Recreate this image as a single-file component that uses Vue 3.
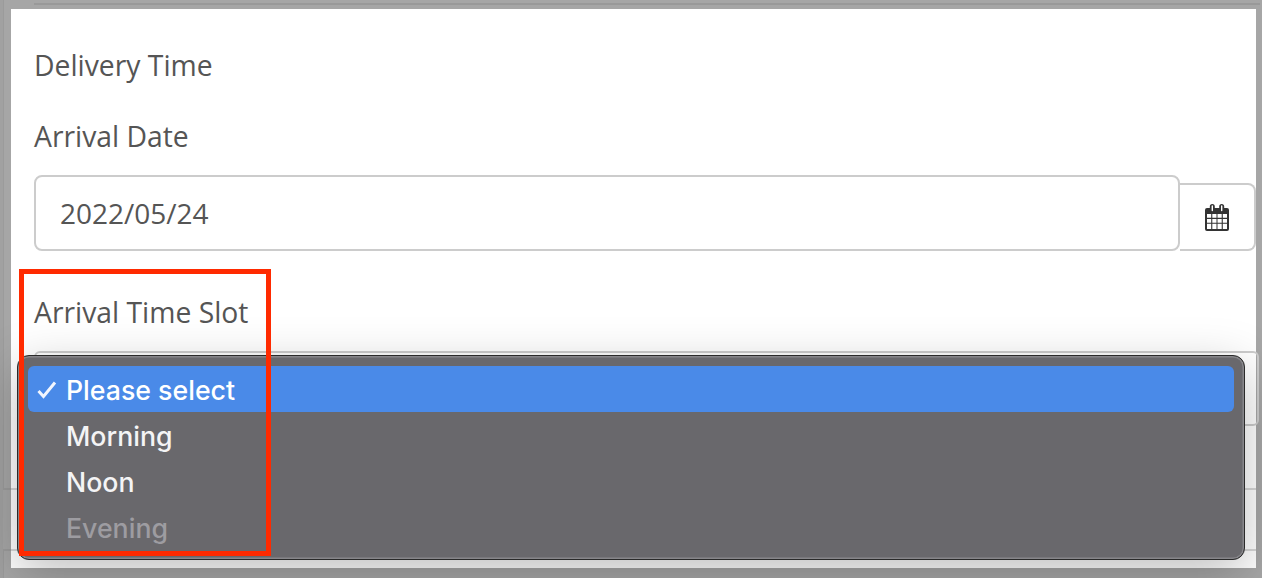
<script setup>
import { ref } from 'vue';

const arrivalDate = ref('2022/05/24');
const slots = [
  { label: 'Please select', selected: true },
  { label: 'Morning' },
  { label: 'Noon' },
  { label: 'Evening', disabled: true }
];
</script>

<template>
  <div class="page">
    <div class="top-strip"></div>
    <section class="panel">
      <h2 class="title">Delivery Time</h2>
      <label class="label">Arrival Date</label>
      <div class="date-row">
        <div class="input">{{ arrivalDate }}</div>
        <button class="cal-btn">
          <svg width="26" height="29" viewBox="0 0 26 29">
            <path fill="#333" d="M1 7a2 2 0 0 1 2-2h2.800V3.500a2.500 2.500 0 0 1 5 0V5h4.400V3.500a2.500 2.500 0 0 1 5 0V5H23a2 2 0 0 1 2 2v19a2 2 0 0 1-2 2H3a2 2 0 0 1-2-2z" />
            <path fill="none" stroke="#fff" stroke-width="1.400" stroke-linecap="round" d="M8.300 3v4.500M17.700 3v4.500" />
            <path fill="#fff" d="M3 11h4.200v3.800H3zM8.300 11h4.200v3.800H8.300zM13.500 11h4.200v3.800h-4.200zM18.800 11H23v3.800h-4.200zM3 15.900h4.200v3.800H3zM8.300 15.900h4.200v3.800H8.300zM13.500 15.900h4.200v3.800h-4.200zM18.800 15.900H23v3.800h-4.200zM3 20.800h4.200V26H3zM8.300 20.800h4.200V26H8.300zM13.500 20.800h4.200V26h-4.200zM18.800 20.800H23V26h-4.200z" />
          </svg>
        </button>
      </div>
      <label class="label slot-label">Arrival Time Slot</label>
      <div class="select"></div>
      <div class="rule rule-one"></div>
      <div class="rule rule-two"></div>

      <ul class="dropdown">
        <li v-for="slot in slots" :key="slot.label" class="option" :class="{ selected: slot.selected, disabled: slot.disabled }">
          <svg v-if="slot.selected" class="check" width="20" height="18" viewBox="0 0 20 18">
            <path fill="none" stroke="#f2f6fe" stroke-width="3" d="M1.500 10l5 5.500L18 1.500" />
          </svg>
          {{ slot.label }}
        </li>
      </ul>
      <div class="highlight-box"></div>
    </section>
  </div>
</template>

<style>
html, body {
  margin: 0;
  background: #a6a6a6;
}
</style>

<style scoped>
.page {
  width: 1262px;
  height: 578px;
  overflow: hidden;
  background:
    linear-gradient(#9b9b9b, #9b9b9b) 3px 0 / 1px 489px no-repeat,
    linear-gradient(#9b9b9b, #9b9b9b) 3px 549px / 1px 29px no-repeat,
    linear-gradient(#a1a1a1, #a1a1a1) 0 0 / 3px 100% no-repeat,
    #a6a6a6;
  font-family: "Open Sans", sans-serif;
  color: #555;
}

.top-strip {
  height: 9px;
  box-sizing: border-box;
  padding-top: 3px;
  margin: 0 2px 0 34px;
}

.top-strip::before {
  content: "";
  display: block;
  height: 2px;
  background: #999;
}

.panel {
  position: relative;
  box-sizing: border-box;
  width: 1245px;
  height: 559px;
  margin-left: 11px;
  padding: 36px 0 0 23px;
  background: #fff;
}

.title {
  margin: 0;
  font-size: 28.300px;
  font-weight: 400;
  line-height: 40px;
}

.label {
  display: block;
  margin-top: 31px;
  font-size: 28.300px;
  line-height: 40px;
}

.date-row {
  display: flex;
  align-items: flex-end;
  margin-top: 19px;
}

.input {
  box-sizing: border-box;
  width: 1146px;
  height: 76px;
  padding-left: 24px;
  border: 2px solid #ccc;
  border-radius: 8px;
  font-size: 28px;
  line-height: 73px;
}

.cal-btn {
  display: flex;
  align-items: center;
  justify-content: center;
  box-sizing: border-box;
  width: 76px;
  height: 68px;
  padding: 0;
  border: 2px solid #ccc;
  border-left: 0;
  border-radius: 0 8px 8px 0;
  background: #fff;
}

.slot-label {
  margin-top: 41px;
}

.select {
  box-sizing: border-box;
  width: 1225px;
  height: 75px;
  margin-top: 19px;
  border: 2px solid #ccc;
  border-radius: 6px;
}

.rule {
  height: 2px;
  margin-left: -31px;
  background: linear-gradient(90deg, #9b9b9b 8px, #d8d8d8 8px);
}

.rule-one {
  margin-top: 62px;
}

.rule-two {
  margin-top: 59px;
}

.dropdown {
  position: absolute;
  left: 6px;
  top: 346px;
  box-sizing: border-box;
  width: 1228px;
  height: 205px;
  margin: 0;
  padding: 10px 10px;
  list-style: none;
  background: #69686c;
  border: 1px solid #2a2a2a;
  border-radius: 12px;
  box-shadow: inset 0 0 0 1.500px #87868a, 0 14px 50px rgba(0, 0, 0, 0.25);
  font-family: Inter, sans-serif;
  font-size: 26.700px;
  font-weight: 500;
}

.option {
  position: relative;
  height: 46px;
  padding-left: 38px;
  line-height: 49px;
  color: #f4f4f5;
  border-radius: 6px;
}

.selected {
  background: #4a8ae8;
  color: #fff;
}

.disabled {
  color: #9d9ca1;
}

.check {
  position: absolute;
  left: 9px;
  top: 15px;
}

.highlight-box {
  position: absolute;
  left: 8px;
  top: 260px;
  box-sizing: border-box;
  width: 252px;
  height: 287px;
  border: 5px solid #ff2a00;
}
</style>
